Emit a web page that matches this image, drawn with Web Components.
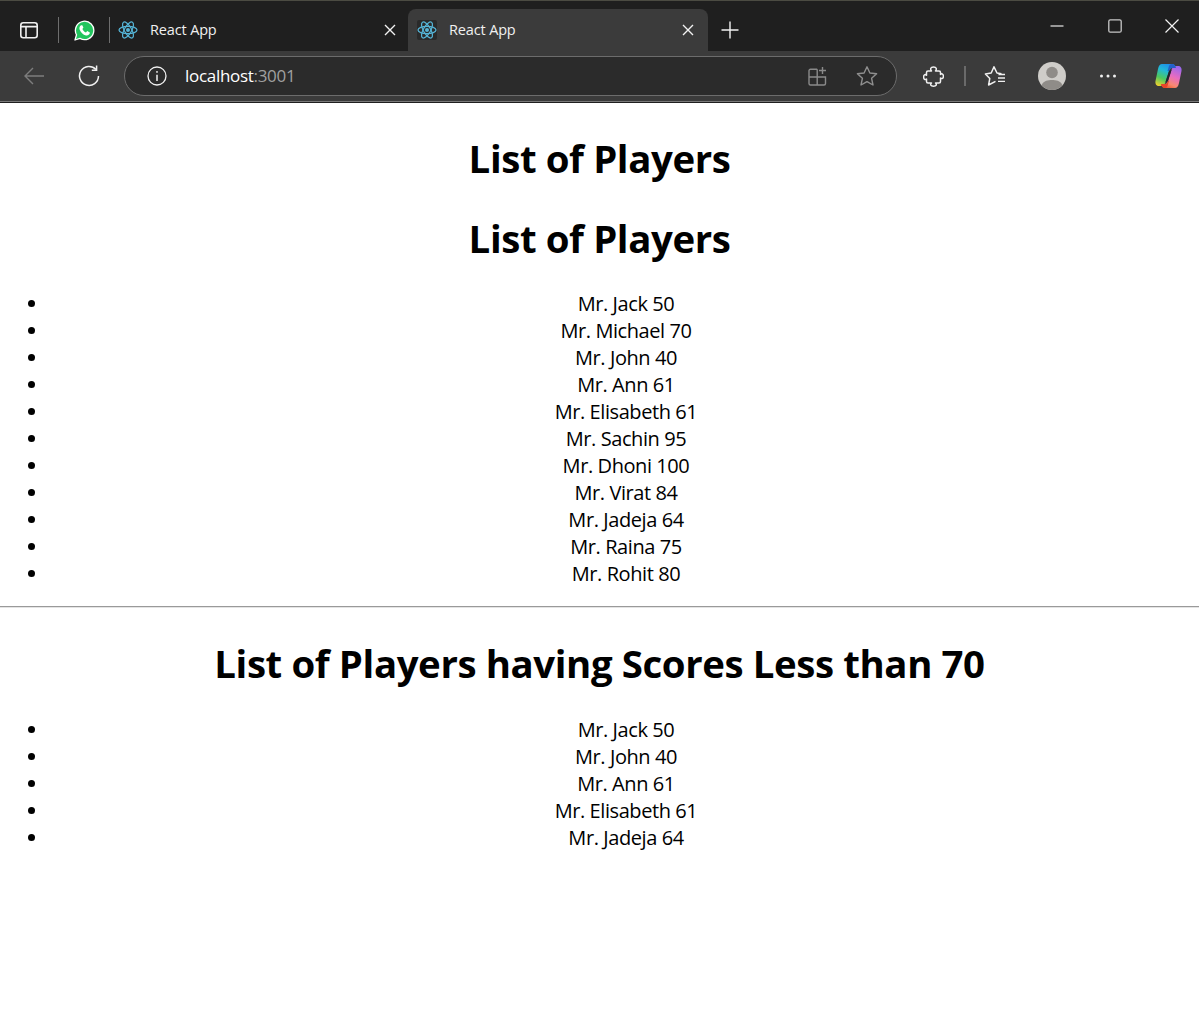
<!DOCTYPE html>
<html lang="en">
<head>
<meta charset="utf-8">
<title>React App</title>
<style>
  html, body { margin: 0; padding: 0; background: #fff; }
  body { font-family: "Open Sans", "Noto Sans", sans-serif; }
</style>
</head>
<body>
<browser-frame url-host="localhost" url-port=":3001"></browser-frame>
<players-page></players-page>

<script>
// react logo used by both tabs
const atom = (size, bg) => `
  <svg width="${size}" height="${size}" viewBox="0 0 20 20" fill="none" stroke="#55b4d6" stroke-width="1.25" style="${bg ? 'background:#2a2a2a;border-radius:2px' : ''}">
    <ellipse cx="10" cy="10" rx="9" ry="3.6"/>
    <ellipse cx="10" cy="10" rx="9" ry="3.6" transform="rotate(60 10 10)"/>
    <ellipse cx="10" cy="10" rx="9" ry="3.6" transform="rotate(120 10 10)"/>
    <circle cx="10" cy="10" r="2" fill="#55b4d6" stroke="none"/>
  </svg>`;

const closeIcon = `
  <svg width="12" height="12" viewBox="0 0 12 12" stroke="#f2f2f2" stroke-width="1.4" fill="none">
    <path d="M1 1 L11 11 M11 1 L1 11"/>
  </svg>`;

class BrowserTab extends HTMLElement {
    constructor() {
        super();
        this.attachShadow({ mode: 'open' });
        const active = this.hasAttribute('active');
        this.shadowRoot.innerHTML = `
            <style>
                :host {
                    display: flex;
                    align-items: center;
                    box-sizing: border-box;
                    height: 42px;
                    color: #f0f0f0;
                    font: 14.5px "Open Sans", "Noto Sans", sans-serif;
                    letter-spacing: -0.15px;
                }
                :host([active]) {
                    background: #3b3b3b;
                    border-radius: 8px 8px 0 0;
                }
                .title { flex: 1; margin-left: 12px; padding-bottom: 2px; white-space: nowrap; }
                .icon { display: flex; }
                .close { display: flex; margin-right: var(--close-gap, 14px); }
            </style>
            <span class="icon">${atom(20, active)}</span>
            <span class="title"><slot></slot></span>
            <span class="close">${closeIcon}</span>
        `;
    }
}
customElements.define('browser-tab', BrowserTab);

class BrowserFrame extends HTMLElement {
    constructor() {
        super();
        this.attachShadow({ mode: 'open' });
        this.render();
    }

    render() {
        const host = this.getAttribute('url-host') || '';
        const port = this.getAttribute('url-port') || '';
        this.shadowRoot.innerHTML = `
            <style>
                :host {
                    display: block;
                    height: 103px;
                    box-sizing: border-box;
                    background: #1f1f1f;
                    border-top: 1px solid #4b4b42;
                    font-family: "Open Sans", "Noto Sans", sans-serif;
                }
                svg { display: block; }
                .strip {
                    display: flex;
                    align-items: flex-end;
                    height: 50px;
                }
                .side { width: 58px; height: 42px; display: flex; align-items: center; justify-content: center; }
                .sep { width: 1px; height: 26px; background: #6e6e6e; margin-bottom: 8px; }
                .app { width: 50px; height: 42px; display: flex; align-items: center; justify-content: center; }
                browser-tab.one { width: 289px; padding-left: 8px; --close-gap: 3px; }
                browser-tab.two { width: 300px; padding-left: 9px; margin-left: 9px; }
                .plus { width: 44px; height: 42px; display: flex; align-items: center; justify-content: center; }
                .spacer { flex: 1; }
                .win { display: flex; align-self: flex-start; }
                .win span { box-sizing: border-box; width: 57.5px; height: 50px; display: flex; align-items: center; justify-content: center; }
                .win span:last-child { width: 55.5px; padding-left: 2px; }
                .bar {
                    display: flex;
                    align-items: center;
                    box-sizing: border-box;
                    height: 51px;
                    background: #3b3b3b;
                    border-bottom: 1px solid #7a7a7a;
                    padding: 1px 3px 1px 6px;
                }
                .nav { width: 55px; display: flex; justify-content: center; }
                .pill {
                    display: flex;
                    align-items: center;
                    box-sizing: border-box;
                    flex: 0 0 773px;
                    height: 40px;
                    margin: 0 0 0 8px;
                    padding: 0 18px 0 22px;
                    background: #2b2b2b;
                    border: 1.5px solid #6c6c6c;
                    border-radius: 20px;
                }
                .url { flex: 1; margin-left: 18px; padding-bottom: 2px; font-size: 17px; letter-spacing: -0.3px; color: #fff; }
                .url span { color: #a0a0a0; }
                .tool { width: 38px; display: flex; justify-content: center; }
                .puzzle { margin-left: 17px; }
                .divider { width: 1.5px; height: 20px; background: #6a6a6a; margin: 0 10px 0 12px; }
                .avatar { margin: 0 23px 0 24.5px; }
                .more { width: 38px; display: flex; justify-content: center; }
                .copilot { width: 56px; margin-left: 13px; display: flex; justify-content: center; }
            </style>
            <div class="strip">
                <span class="side">
                    <svg width="20" height="20" viewBox="0 0 20 20" fill="none" stroke="#f0f0f0" stroke-width="1.6">
                        <rect x="1.8" y="2.8" width="16.4" height="15" rx="2.5"/>
                        <path d="M1.8 6.6 H18.2 M7 6.6 V17.8"/>
                    </svg>
                </span>
                <span class="sep"></span>
                <span class="app">
                    <svg width="21" height="21" viewBox="0 0 21 21">
                        <path d="M1 20 L2.5 14.8 A9.2 9.2 0 1 1 6 18.4 Z" fill="#22c55e" stroke="#fff" stroke-width="1.3" stroke-linejoin="round"/>
                        <path d="M7.2 5.2 C6 5.6 5 7.2 5.6 9.4 C6.6 12.4 9 14.6 12 15.4 C13.8 15.8 15.4 14.6 15.8 13.2 L15.8 12.4 L13.2 11 L12 12.4 C10.2 11.8 9 10.4 8.4 8.9 L9.4 7.6 L8.3 5.2 Z" fill="#fff"/>
                    </svg>
                </span>
                <span class="sep"></span>
                <browser-tab class="one">React App</browser-tab>
                <browser-tab class="two" active>React App</browser-tab>
                <span class="plus">
                    <svg width="18" height="18" viewBox="0 0 18 18" stroke="#f2f2f2" stroke-width="1.4"><path d="M9 0.5 V17.5 M0.5 9 H17.5"/></svg>
                </span>
                <span class="spacer"></span>
                <div class="win">
                    <span><svg width="14" height="14" viewBox="0 0 14 14" stroke="#e8e8e8" stroke-width="1.2"><path d="M0.5 7 H13.5"/></svg></span>
                    <span><svg width="14" height="14" viewBox="0 0 14 14" fill="none" stroke="#c8c8c8" stroke-width="1.3"><rect x="0.8" y="0.8" width="12.4" height="12.4" rx="1.5"/></svg></span>
                    <span><svg width="14" height="14" viewBox="0 0 14 14" fill="none" stroke="#f2f2f2" stroke-width="1.2"><path d="M0.5 0.5 L13.5 13.5 M13.5 0.5 L0.5 13.5"/></svg></span>
                </div>
            </div>
            <div class="bar">
                <span class="nav">
                    <svg width="22" height="20" viewBox="0 0 22 20" fill="none" stroke="#7d7d7d" stroke-width="1.4"><path d="M21 10 H2 M10 2 L2 10 L10 18"/></svg>
                </span>
                <span class="nav">
                    <svg width="22" height="22" viewBox="0 0 22 22" fill="none" stroke="#f0f0f0" stroke-width="1.5"><path d="M18 4.5 A9.5 9.5 0 1 0 20.5 11"/><path d="M18.6 0.5 V5.2 H13.8"/></svg>
                </span>
                <div class="pill">
                    <svg width="20" height="20" viewBox="0 0 20 20" fill="none" stroke="#f0f0f0" stroke-width="1.3">
                        <circle cx="10" cy="10" r="9"/>
                        <path d="M10 8.8 V15" stroke-width="1.5"/>
                        <circle cx="10" cy="5.9" r="0.9" fill="#f0f0f0" stroke="none"/>
                    </svg>
                    <span class="url">${host}<span>${port}</span></span>
                    <svg width="20" height="20" viewBox="0 0 20 20" fill="none" stroke="#8a8a8a" stroke-width="1.4" style="margin-right:28px">
                        <path d="M9.2 3.2 H2.5 A1.5 1.5 0 0 0 1 4.7 V17.5 A1.5 1.5 0 0 0 2.5 19 H16 A1.5 1.5 0 0 0 17.5 17.5 V11 H1 M9.2 3.2 V19"/>
                        <path d="M14.5 1 V8 M11 4.5 H18"/>
                    </svg>
                    <svg width="22" height="22" viewBox="0 0 22 22" fill="none" stroke="#8f8f8f" stroke-width="1.4" stroke-linejoin="round">
                        <path d="M11 1.8 L13.9 8 L20.6 8.8 L15.6 13.3 L17 20 L11 16.6 L5 20 L6.4 13.3 L1.4 8.8 L8.1 8 Z"/>
                    </svg>
                </div>
                <span class="tool puzzle">
                    <svg width="21" height="21" viewBox="0 0 21 21" fill="none" stroke="#f0f0f0" stroke-width="1.5" stroke-linejoin="round">
                        <path d="M8.5 5 C7 3 7.5 1 10.5 1 C13.5 1 14 3 12.5 5 H16 Q17.5 5 17.5 6.5 V8.5 C19 7.2 20.4 8 20.4 10.2 C20.4 12.4 19 13.2 17.5 12 V15.5 Q17.5 17 16 17 H12.5 C14 18.5 13.5 20.2 10.5 20.2 C7.5 20.2 7 18.5 8.5 17 H5 Q3.5 17 3.5 15.5 V13 C2 14.2 0.6 13.4 0.6 11 C0.6 8.8 2 8 3.5 9.2 V6.5 Q3.5 5 5 5 Z"/>
                    </svg>
                </span>
                <span class="divider"></span>
                <span class="tool">
                    <svg width="22" height="22" viewBox="0 0 22 22" fill="none" stroke="#f0f0f0" stroke-width="1.5" stroke-linejoin="round">
                        <path d="M17.5 8.8 L13 8 L10 1.8 L7.2 8 L1.4 8.9 L5.8 13.4 L4.6 20 L11.5 16.3"/>
                        <path d="M14.5 9.5 H21 M14 13 H21 M14 16.3 H21" stroke-width="1.3"/>
                    </svg>
                </span>
                <span class="avatar">
                    <svg width="28" height="28" viewBox="0 0 28 28">
                        <circle cx="14" cy="14" r="14" fill="#cfcdc9"/>
                        <circle cx="14" cy="10.5" r="5.8" fill="#8f8c88"/>
                        <path d="M3.5 23.2 C6 18.4 10 18 14 18 C18 18 22 18.4 24.5 23.2 A14 14 0 0 1 3.5 23.2 Z" fill="#8f8c88"/>
                    </svg>
                </span>
                <span class="more">
                    <svg width="18" height="4" viewBox="0 0 18 4" fill="#f0f0f0"><circle cx="2.5" cy="2" r="1.5"/><circle cx="9" cy="2" r="1.5"/><circle cx="15.5" cy="2" r="1.5"/></svg>
                </span>
                <span class="copilot">
                    <svg width="27" height="24" viewBox="0 0 27 24">
                        <defs>
                            <linearGradient id="cpA" x1="0.6" y1="0" x2="0.2" y2="1">
                                <stop offset="0" stop-color="#1f8fe8"/><stop offset="0.3" stop-color="#22b8d8"/><stop offset="0.65" stop-color="#4cc860"/><stop offset="1" stop-color="#e8d030"/>
                            </linearGradient>
                            <linearGradient id="cpB" x1="0.7" y1="0" x2="0.3" y2="1">
                                <stop offset="0" stop-color="#9a68ee"/><stop offset="0.45" stop-color="#e86cc0"/><stop offset="0.8" stop-color="#f88a70"/><stop offset="1" stop-color="#ee5a30"/>
                            </linearGradient>
                        </defs>
                        <path d="M7 0 H17 C19 0 20.5 1.5 21 4 L17 4 C15.5 4 14.5 5 14 7 L10.5 18 C9.5 21 8 22 5.5 22 H4 C1.5 22 0 20 0.5 17 L3 5 C3.7 1.8 5 0 7 0 Z" fill="url(#cpA)"/>
                        <path d="M20 24 H10 C8 24 6.5 22.5 6 20 L10 20 C11.5 20 12.5 19 13 17 L16.5 6 C17.5 3 19 2 21.5 2 H23 C25.5 2 27 4 26.5 7 L24 19 C23.3 22.2 22 24 20 24 Z" fill="url(#cpB)"/>
                        <path d="M14 7 L16.5 6 L13 17 L10.5 18 Z" fill="#20242e"/>
                        <path d="M17 0 C19 0 20.5 1.5 21 4 L17 4 C15.5 4 14.5 5 14 7 L12.5 7 L14 2 C14.5 0.8 15.5 0 17 0 Z" fill="#2460c8"/>
                        <path d="M10 24 C8 24 6.5 22.5 6 20 L10 20 C11.5 20 12.5 19 13 17 L14 17 L12.5 22 C12 23.2 11 24 10 24 Z" fill="#e8452a"/>
                    </svg>
                </span>
            </div>
        `;
    }
}
customElements.define('browser-frame', BrowserFrame);

class PlayerList extends HTMLElement {
    constructor() {
        super();
        this.attachShadow({ mode: 'open' });
        this.shadowRoot.innerHTML = `
            <style>
                :host {
                    display: block;
                    text-align: center;
                    color: #000;
                    font-family: "Open Sans", "Noto Sans", sans-serif;
                }
                h1 {
                    margin: 0;
                    font-size: 38.4px;
                    line-height: 54px;
                    font-weight: 700;
                    letter-spacing: -0.4px;
                }
                ul {
                    list-style: disc;
                    margin: var(--list-gap, 25px) 0 0;
                    padding: 0 0 0 49px;
                }
            </style>
            <h1>${this.getAttribute('heading') || ''}</h1>
            <ul><slot></slot></ul>
        `;
    }
}
customElements.define('player-list', PlayerList);

class PlayerItem extends HTMLElement {
    constructor() {
        super();
        this.attachShadow({ mode: 'open' });
        this.shadowRoot.innerHTML = `
            <style>
                :host {
                    display: list-item;
                    padding-left: 4px;
                    height: 27px;
                    line-height: 27px;
                    font-size: 20px;
                    letter-spacing: -0.42px;
                }
            </style>
            Mr. ${this.getAttribute('name')} ${this.getAttribute('score')}
        `;
    }
}
customElements.define('player-item', PlayerItem);

const PLAYERS = [
    ['Jack', 50], ['Michael', 70], ['John', 40], ['Ann', 61], ['Elisabeth', 61], ['Sachin', 95],
    ['Dhoni', 100], ['Virat', 84], ['Jadeja', 64], ['Raina', 75], ['Rohit', 80]
];

class PlayersPage extends HTMLElement {
    constructor() {
        super();
        this.attachShadow({ mode: 'open' });
        const items = (list) => list.map(([name, score]) => `<player-item name="${name}" score="${score}"></player-item>`).join('');
        this.shadowRoot.innerHTML = `
            <style>
                :host { display: block; padding-top: 28px; }
                player-list.main { margin-top: 26px; }
                player-list.low { margin-top: 28px; --list-gap: 26px; }
                hr { margin: 19px 0 0; border: 0; border-bottom: 1px solid #e4e4e4; height: 1px; background: #9a9a9a; }
            </style>
            <player-list heading="List of Players"></player-list>
            <player-list class="main" heading="List of Players">${items(PLAYERS)}</player-list>
            <hr>
            <player-list class="low" heading="List of Players having Scores Less than 70">${items(PLAYERS.filter((p) => p[1] < 70))}</player-list>
        `;
    }
}
customElements.define('players-page', PlayersPage);
</script>
</body>
</html>
